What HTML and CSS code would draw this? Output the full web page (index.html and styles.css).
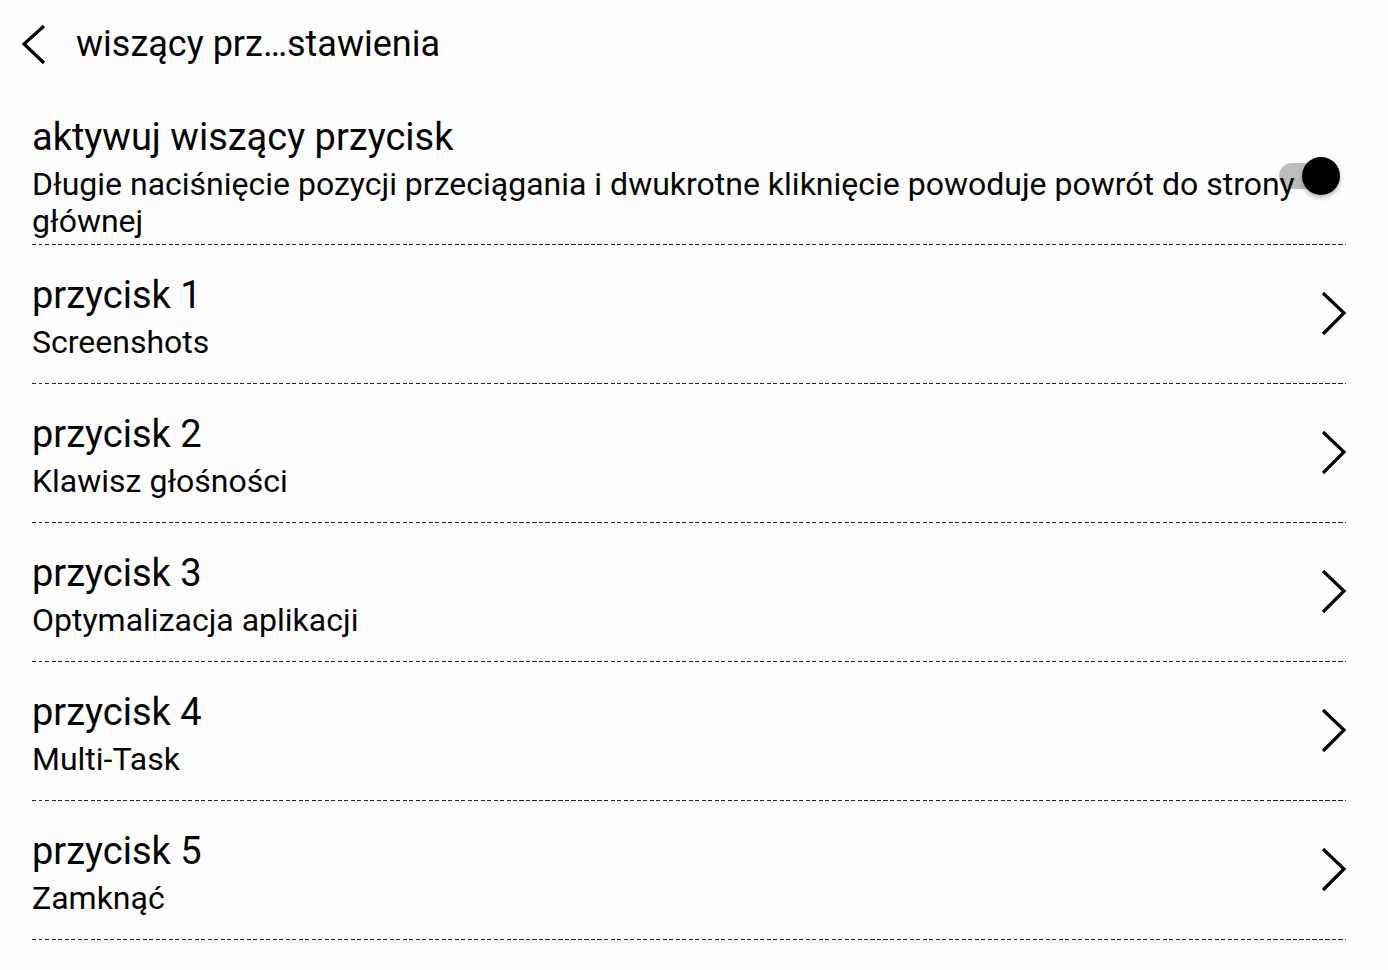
FILE: index.html
```html
<!DOCTYPE html>
<html lang="pl">
<head>
<meta charset="utf-8">
<title>wiszący przycisk ustawienia</title>
<link rel="stylesheet" href="styles.css">
</head>
<body>
<div class="page">
  <header class="topbar">
    <svg class="back" width="30" height="44" viewBox="0 0 30 44"><polyline points="24,4 4,22 24,41" fill="none" stroke="#000" stroke-width="3.2"/></svg>
    <span class="topbar-title">wiszący prz…stawienia</span>
  </header>

  <section class="toggle-row">
    <div class="texts">
      <div class="heading">aktywuj wiszący przycisk</div>
      <div class="desc">Długie naciśnięcie pozycji przeciągania i dwukrotne kliknięcie powoduje powrót do strony głównej</div>
    </div>
    <div class="switch"><span class="track"></span><span class="thumb"></span></div>
  </section>
  <div class="divider"></div>

  <section class="item">
    <div class="texts"><div class="title">przycisk 1</div><div class="sub">Screenshots</div></div>
    <svg class="chev" width="28" height="46" viewBox="0 0 28 46"><polyline points="3,2 24,22 3,43" fill="none" stroke="#000" stroke-width="3.2"/></svg>
  </section>
  <div class="divider"></div>

  <section class="item">
    <div class="texts"><div class="title">przycisk 2</div><div class="sub">Klawisz głośności</div></div>
    <svg class="chev" width="28" height="46" viewBox="0 0 28 46"><polyline points="3,2 24,22 3,43" fill="none" stroke="#000" stroke-width="3.2"/></svg>
  </section>
  <div class="divider"></div>

  <section class="item">
    <div class="texts"><div class="title">przycisk 3</div><div class="sub">Optymalizacja aplikacji</div></div>
    <svg class="chev" width="28" height="46" viewBox="0 0 28 46"><polyline points="3,2 24,22 3,43" fill="none" stroke="#000" stroke-width="3.2"/></svg>
  </section>
  <div class="divider"></div>

  <section class="item">
    <div class="texts"><div class="title">przycisk 4</div><div class="sub">Multi-Task</div></div>
    <svg class="chev" width="28" height="46" viewBox="0 0 28 46"><polyline points="3,2 24,22 3,43" fill="none" stroke="#000" stroke-width="3.2"/></svg>
  </section>
  <div class="divider"></div>

  <section class="item">
    <div class="texts"><div class="title">przycisk 5</div><div class="sub">Zamknąć</div></div>
    <svg class="chev" width="28" height="46" viewBox="0 0 28 46"><polyline points="3,2 24,22 3,43" fill="none" stroke="#000" stroke-width="3.2"/></svg>
  </section>
  <div class="divider"></div>
</div>
</body>
</html>
```

FILE: styles.css
```css
html, body {
  margin: 0;
  padding: 0;
  background: #fcfcfc;
}
body {
  font-family: Roboto, "Noto Sans", sans-serif;
  color: #050505;
}
.page {
  width: 1388px;
  height: 970px;
  overflow: hidden;
}
.topbar {
  display: flex;
  align-items: center;
  height: 88px;
  padding-left: 20px;
}
.back {
  display: block;
  margin-right: 26px;
}
.topbar-title {
  font-size: 36px;
  line-height: 40px;
}
.toggle-row {
  position: relative;
  padding: 27px 42px 4px 32px;
}
.toggle-row .texts {
  position: relative;
  z-index: 1;
}
.heading {
  font-size: 38px;
  line-height: 44px;
}
.desc {
  margin-top: 7px;
  font-size: 32px;
  line-height: 37px;
}
.switch {
  position: absolute;
  left: 1279px;
  top: 69px;
  width: 62px;
  height: 38px;
}
.track {
  position: absolute;
  left: 0;
  top: 6px;
  width: 60px;
  height: 26px;
  border-radius: 13px;
  background: #bdbdbd;
}
.thumb {
  position: absolute;
  left: 23px;
  top: 0;
  width: 38px;
  height: 38px;
  border-radius: 50%;
  background: #000;
  box-shadow: 0 3px 4px rgba(0,0,0,0.25);
}
.divider {
  height: 1px;
  margin: 0 42px 0 32px;
  background: repeating-linear-gradient(to right, #222 0, #222 4px, transparent 4px, transparent 6.5px);
}
.item {
  display: flex;
  align-items: center;
  justify-content: space-between;
  height: 138px;
  padding: 0 40px 0 32px;
}
.item .texts {
  padding-top: 4px;
}
.title {
  font-size: 38px;
  line-height: 52px;
}
.sub {
  font-size: 32px;
  line-height: 42px;
}
.chev {
  display: block;
}
```
